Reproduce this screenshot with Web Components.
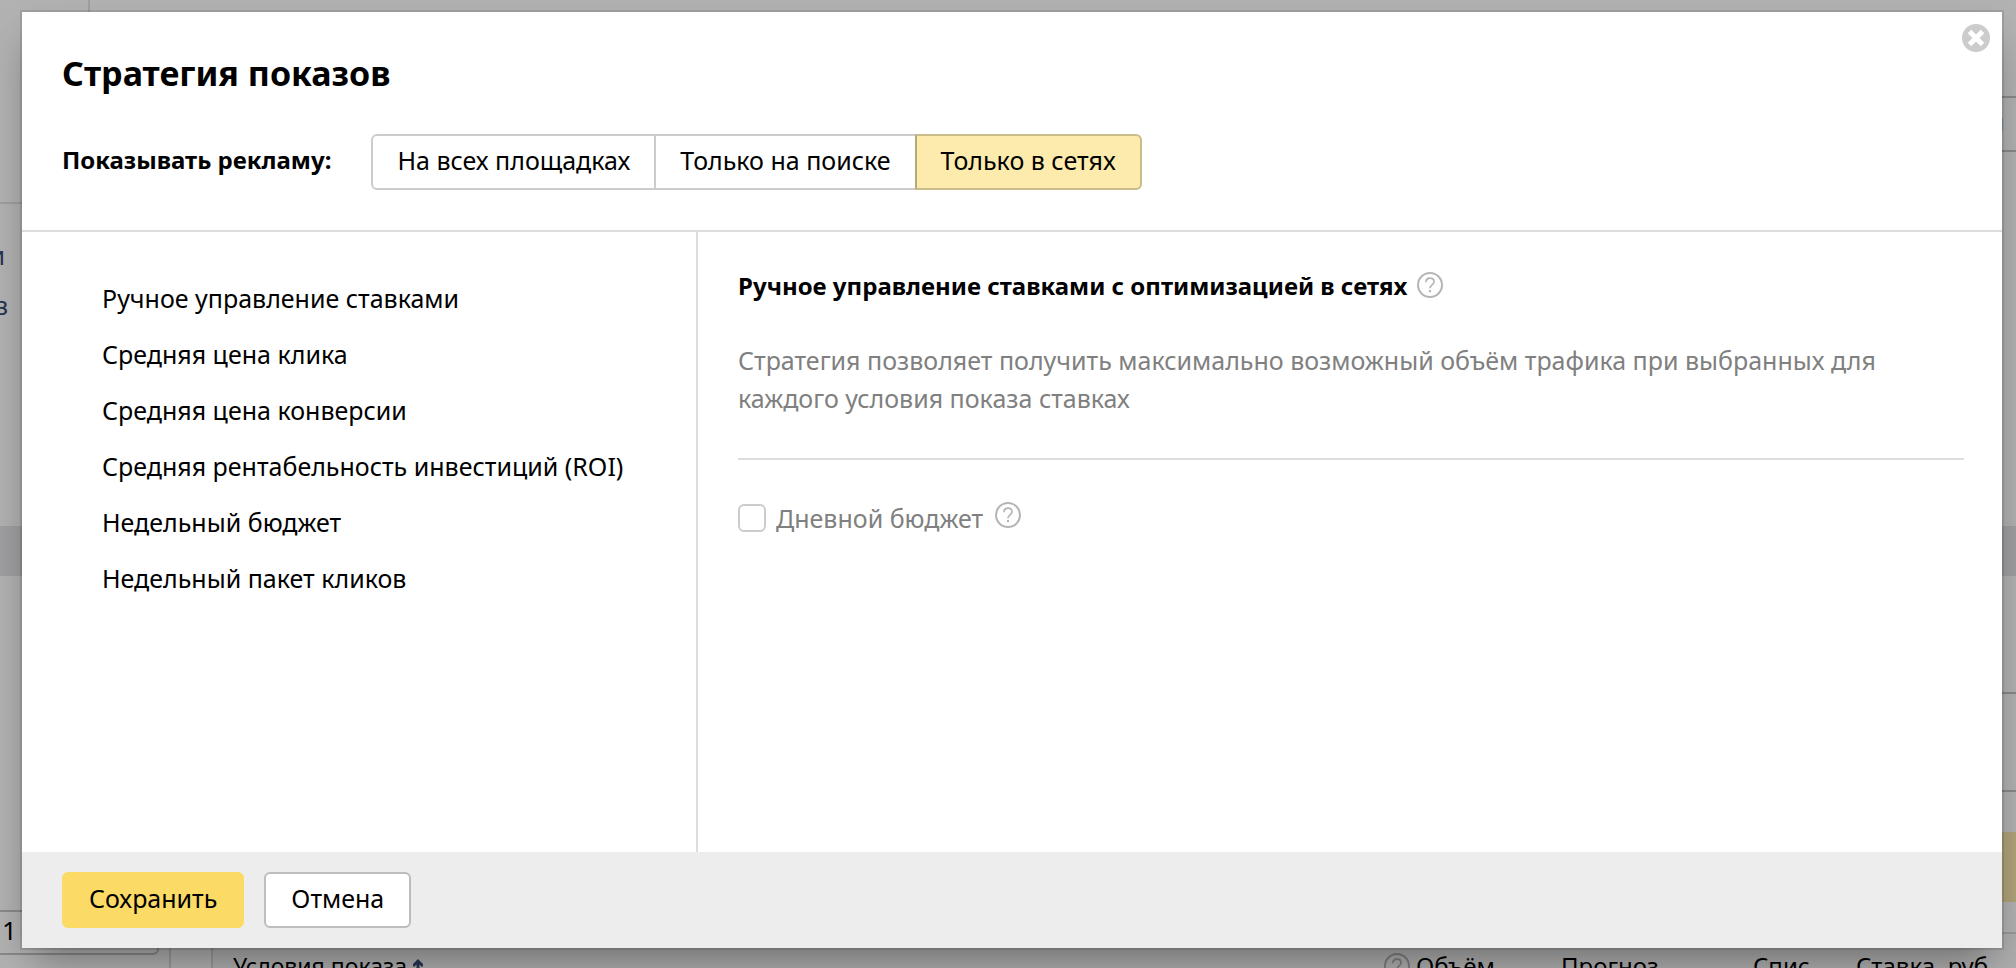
<!DOCTYPE html>
<html lang="ru">
<head>
<meta charset="utf-8">
<title>Стратегия показов</title>
<style>
body{margin:0;font-family:"Noto Sans","Open Sans",sans-serif;font-size:25px;color:#000;background:#fff}
</style>
</head>
<body>
<strategy-page></strategy-page>
<script>
function define(name, html) {
  const t = document.createElement('template');
  t.innerHTML = html;
  customElements.define(name, class extends HTMLElement {
    constructor() {
      super();
      this.attachShadow({ mode: 'open' }).append(t.content.cloneNode(true));
    }
  });
}

define('help-icon', `
<style>
:host{display:inline-flex;flex:none;width:26px;height:26px}
button{all:unset;display:flex;cursor:pointer}
</style>
<button type="button" aria-label="Справка">
<svg width="26" height="26" viewBox="0 0 26 26" fill="none" stroke="#b5b5b5">
<circle cx="13" cy="13" r="12" stroke-width="2"/>
<path d="M8.9 10.2c0-2.5 1.7-4 4.1-4 2.3 0 4 1.4 4 3.5 0 3.2-4 3.2-4 6.6" stroke-width="1.7"/>
<path d="M13 18v2.2" stroke-width="2"/>
</svg></button>`);

define('ui-button', `
<style>
:host{display:inline-flex}
button{font:inherit;font-size:25px;line-height:48px;color:#000;background:#fff;border:2px solid #bdbdbd;border-radius:6px;padding:0 25px 4px;margin:0;cursor:pointer;white-space:nowrap}
:host([primary]) button{background:#fbdb65;border-color:#fbdb65}
</style>
<button type="button"><slot></slot></button>`);

define('segment-button', `
<style>
:host{display:inline-flex}
:host(:not(:first-child)){margin-left:-2px}
button{font:inherit;font-size:25px;line-height:48px;color:#000;background:#fff;border:2px solid #ccc;padding:0 24px 4px;margin:0;cursor:pointer;white-space:nowrap}
:host(:first-child) button{border-radius:6px 0 0 6px}
:host(:last-child) button{border-radius:0 6px 6px 0}
:host([checked]) button{background:#fdebad;border-color:#cabc8a;border-left-color:#b6aa7d}
</style>
<button type="button"><slot></slot></button>`);

define('strategy-list', `
<style>
:host{display:block}
ul{list-style:none;margin:0;padding:0}
::slotted(li){line-height:56px;cursor:pointer;white-space:nowrap}
</style>
<ul><slot></slot></ul>`);

define('strategy-details', `
<style>
:host{display:block}
header{display:flex;align-items:center;gap:10px}
h2{font-size:24px;line-height:40px;margin:0;white-space:nowrap}
header help-icon{margin-bottom:2px}
p{color:#808080;line-height:38px;margin:35px 0 0;max-width:1180px}
hr{border:0;height:2px;background:#ddd;margin:41px 0 38px}
.budget{display:flex;align-items:center;gap:12px}
label{display:flex;align-items:center;gap:10px;font-size:25px;line-height:40px;color:#808080}
input{appearance:none;width:28px;height:28px;margin:0;border:2px solid #ccc;border-radius:6px;background:#fff}
.budget help-icon{margin-bottom:6px}
</style>
<header><h2>Ручное управление ставками с оптимизацией в сетях</h2><help-icon></help-icon></header>
<p>Стратегия позволяет получить максимально возможный объём трафика при выбранных для каждого условия показа ставках</p>
<hr>
<div class="budget"><label><input type="checkbox">Дневной бюджет</label><help-icon></help-icon></div>`);

define('strategy-dialog', `
<style>
:host{display:flex;flex-direction:column;background:#fff;box-shadow:0 0 0 2px rgba(0,0,0,.1),0 20px 40px -10px rgba(0,0,0,.4)}
.top{padding:40px 40px 40px;border-bottom:2px solid #ddd}
h1{font-size:34px;line-height:42px;margin:0 0 40px}
.row{display:flex;align-items:center;gap:40px}
.label{font-size:24px;font-weight:700;line-height:40px;padding-bottom:4px}
.seg{display:flex}
main{flex:1;display:grid;grid-template-columns:676px 1fr}
nav{border-right:2px solid #ddd;box-sizing:border-box;padding:38px 20px 0 80px}
strategy-details{padding:34px 38px 0 40px}
footer{display:flex;gap:20px;background:#ededed;padding:20px 40px}
.close{all:unset;position:absolute;top:12px;right:12px;width:28px;height:28px;cursor:pointer}
.close svg{display:block}
</style>
<div class="top">
<h1>Стратегия показов</h1>
<div class="row">
<span class="label" id="l">Показывать рекламу:</span>
<div class="seg" role="group" aria-labelledby="l">
<segment-button>На всех площадках</segment-button><segment-button>Только на поиске</segment-button><segment-button checked>Только в сетях</segment-button>
</div></div></div>
<main>
<nav><strategy-list>
<li>Ручное управление ставками</li>
<li>Средняя цена клика</li>
<li>Средняя цена конверсии</li>
<li>Средняя рентабельность инвестиций (ROI)</li>
<li>Недельный бюджет</li>
<li>Недельный пакет кликов</li>
</strategy-list></nav>
<strategy-details></strategy-details>
</main>
<footer><ui-button primary>Сохранить</ui-button><ui-button>Отмена</ui-button></footer>
<button class="close" type="button" aria-label="Закрыть"><svg width="28" height="28" viewBox="0 0 28 28"><circle cx="14" cy="14" r="14" fill="#ccc"/><path d="M7.5 7.5l13 13M20.5 7.5l-13 13" stroke="#fff" stroke-width="5"/></svg></button>`);

define('campaign-page', `
<style>
:host{display:grid;grid-template-columns:171px 1fr;height:100vh;overflow:hidden;font-size:23px;line-height:32px}
.left{display:flex;flex-direction:column}
.logo{height:202px;border-bottom:2px solid #e4e4e4}
.logo div{width:88px;height:100%;border-right:2px solid #e4e4e4}
.links{height:296px;padding-top:26px;font-size:25px}
.links a{display:flex;justify-content:flex-end;overflow:hidden;width:8px;line-height:50px;color:#3c4a78;text-decoration:none}
.links a:first-child{width:5px}
.band{height:50px;background:#e6e6e9}
.rest{flex:1;border-right:2px solid #ddd;padding-top:334px}
.pager{box-sizing:border-box;width:159px;height:45px;border:2px solid #c4c4c4;border-left:0;border-radius:0 6px 6px 0;line-height:36px;font-size:26px;padding-left:2px}
.right{display:flex;flex-direction:column}
.line{flex:none;height:2px;background:#c6c6c6}
.bar{box-sizing:border-box;height:52px;display:flex;justify-content:flex-end;align-items:center;padding:0 12px 4px 0;color:#3b80cc}
.pale{background:#ddd}
.yellow{height:70px;background:#fcebaf}
.under{flex:1;margin-left:40px;border-left:2px solid #ddd;background:#fafafa}
table{width:100%;table-layout:fixed;border-collapse:collapse;margin-top:16px}
th{padding:0;text-align:left;font-weight:400;font-size:24px;white-space:nowrap}
th:first-child{padding-left:20px;font-size:23px}
th div{display:flex;align-items:center;gap:6px}
</style>
<div class="left">
<div class="logo"><div></div></div>
<div class="links"><a href="#">и</a><a href="#">в</a></div>
<div class="band"></div>
<div class="rest"><div class="pager">1</div></div>
</div>
<div class="right">
<div style="height:96px"></div><div class="line"></div>
<div class="bar">и</div><div class="line"></div>
<div style="height:374px"></div><div class="band"></div>
<div style="height:116px"></div><div class="line"></div>
<div style="height:96px"></div><div class="line"></div>
<div style="height:40px"></div><div class="yellow"></div>
<div style="height:30px"></div><div class="line pale"></div>
<div class="under"><table>
<colgroup><col><col style="width:177px"><col style="width:192px"><col style="width:103px"><col style="width:160px"></colgroup>
<tr><th><div>Условия показа <svg width="10" height="16" viewBox="0 0 10 16" fill="none" stroke="#3c4a78" stroke-width="3"><path d="M0 8l5-5 5 5M5 3v13"/></svg></div></th><th><div><help-icon></help-icon>Объём</div></th><th>Прогноз</th><th>Спис</th><th>Ставка, руб</th></tr>
</table></div>
</div>`);

define('strategy-page', `
<style>
:host{display:block;position:relative;min-height:100vh}
.scrim{position:absolute;inset:0;display:grid;padding:12px 14px 20px 22px;background:rgba(0,0,0,.3)}
strategy-dialog{position:relative}
</style>
<campaign-page></campaign-page>
<div class="scrim"><strategy-dialog role="dialog" aria-label="Стратегия показов"></strategy-dialog></div>`);
</script>
</body>
</html>
